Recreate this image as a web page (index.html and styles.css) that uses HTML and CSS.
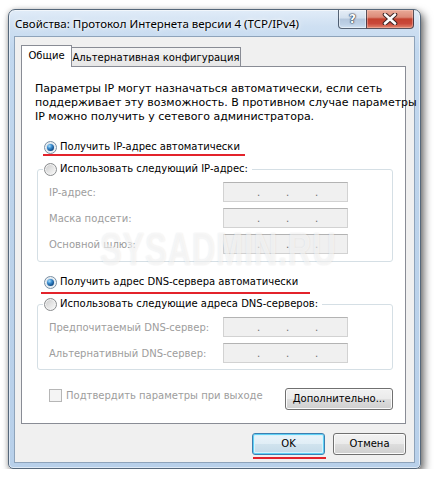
FILE: index.html
```html
<!DOCTYPE html>
<html lang="ru">
<head>
<meta charset="utf-8">
<title>Свойства: Протокол Интернета версии 4 (TCP/IPv4)</title>
<link rel="stylesheet" href="styles.css">
</head>
<body>
<div class="window">
  <div class="titlebar">
    <div class="title">Свойства: Протокол Интернета версии 4 (TCP/IPv4)</div>
    <div class="caption-btns">
      <div class="cbtn help"><span>?</span></div>
      <div class="cbtn close">
        <svg width="16" height="12" viewBox="0 0 16 12">
          <path d="M3 1.5 L13 10.5 M13 1.5 L3 10.5" stroke="#3d2424" stroke-width="4.6" stroke-linecap="round" fill="none"/>
          <path d="M3 1.5 L13 10.5 M13 1.5 L3 10.5" stroke="#ffffff" stroke-width="2.6" stroke-linecap="round" fill="none"/>
        </svg>
      </div>
    </div>
  </div>
  <div class="client">
    <div class="tabs">
      <div class="tab active">Общие</div>
      <div class="tab">Альтернативная конфигурация</div>
    </div>
    <div class="panel">
      <p class="intro">Параметры IP могут назначаться автоматически, если сеть<br>поддерживает эту возможность. В противном случае параметры<br>IP можно получить у сетевого администратора.</p>

      <div class="opt first mark mark-ip"><span class="radio on"></span>Получить IP-адрес автоматически</div>
      <fieldset class="group g1">
        <legend><span class="radio"></span>Использовать следующий IP-адрес:</legend>
        <div class="field"><span class="lbl">IP-адрес:</span><span class="ip"><i>.</i><i>.</i><i>.</i></span></div>
        <div class="field"><span class="lbl">Маска подсети:</span><span class="ip"><i>.</i><i>.</i><i>.</i></span></div>
        <div class="field"><span class="lbl">Основной шлюз:</span><span class="ip"><i>.</i><i>.</i><i>.</i></span></div>
      </fieldset>

      <div class="opt second mark mark-dns"><span class="radio on"></span>Получить адрес DNS-сервера автоматически</div>
      <fieldset class="group g2">
        <legend><span class="radio"></span>Использовать следующие адреса DNS-серверов:</legend>
        <div class="field"><span class="lbl">Предпочитаемый DNS-сервер:</span><span class="ip"><i>.</i><i>.</i><i>.</i></span></div>
        <div class="field"><span class="lbl">Альтернативный DNS-сервер:</span><span class="ip"><i>.</i><i>.</i><i>.</i></span></div>
      </fieldset>

      <div class="confirm-row">
        <div class="check-wrap"><span class="checkbox"></span><span class="check-text">Подтвердить параметры при выходе</span></div>
        <div class="btn adv">Дополнительно...</div>
      </div>
    </div>
    <div class="buttons">
      <div class="btn default mark mark-ok">OK</div>
      <div class="btn">Отмена</div>
    </div>
  </div>
  <div class="watermark">SYSADMIN.RU</div>
</div>
</body>
</html>
```
FILE: styles.css
```css
body {
  margin: 0;
  background: #ffffff;
  font-family: "DejaVu Sans", Tahoma, sans-serif;
  font-size: 10px;
  color: #000000;
}

.window {
  position: relative;
  box-sizing: border-box;
  width: 413px;
  height: 460px;
  margin: 9px 0 0 8px;
  border: 1px solid #56687b;
  border-radius: 7px 7px 5px 5px;
  padding: 0 5px 5px 5px;
  background: linear-gradient(180deg, #e1ecf8 0px, #cfe0f2 16px, #c2d8ef 40px, #bcd3eb 200px, #b8d0ea 100%);
  box-shadow: inset 0 0 0 1px rgba(255, 255, 255, 0.55), 3px 4px 9px rgba(0, 0, 0, 0.6), -1px 0 4px rgba(0, 0, 0, 0.12);
}

.titlebar {
  display: flex;
  align-items: flex-start;
  height: 26px;
}

.title {
  padding: 6px 0 0 1px;
  font-family: "Noto Sans", "Liberation Sans", sans-serif;
  font-size: 11.5px;
  line-height: 16px;
  color: #000;
  text-shadow: 0 0 6px #ffffff, 0 0 3px #ffffff;
  white-space: nowrap;
}

.caption-btns {
  display: flex;
  margin-left: auto;
  margin-right: 1px;
}

.cbtn {
  box-sizing: border-box;
  height: 19px;
  display: flex;
  align-items: center;
  justify-content: center;
  border: 1px solid rgba(40, 55, 75, 0.75);
  border-top: 0;
}

.help {
  width: 28px;
  border-radius: 0 0 0 4px;
  border-right: 0;
  background: linear-gradient(180deg, #e6eef7 0%, #d3e0ee 45%, #b4c7dd 50%, #bed1e6 80%, #d2e3f3 100%);
  box-shadow: inset 0 0 0 1px rgba(255, 255, 255, 0.45);
}

.help span {
  font-family: "DejaVu Sans", sans-serif;
  font-weight: bold;
  font-size: 12px;
  line-height: 12px;
  color: #ffffff;
  text-shadow: 0 0 1px #1f2f44, 0 0 1px #1f2f44, 0 0 2px #1f2f44;
}

.close {
  width: 48px;
  border-radius: 0 0 4px 0;
  background: linear-gradient(180deg, #e9aa98 0%, #dc8a78 40%, #c4422f 50%, #c9483a 75%, #e2866d 100%);
  box-shadow: inset 0 0 0 1px rgba(255, 210, 200, 0.4);
}

.close svg {
  display: block;
}

.client {
  box-sizing: border-box;
  width: 401px;
  height: 427px;
  border: 1px solid #8ea3ba;
  background: #f0f0f0;
  padding: 8px 0 0 6px;
}

.tabs {
  display: flex;
  align-items: flex-end;
  height: 21px;
}

.tab {
  box-sizing: border-box;
  height: 19px;
  width: 170px;
  margin-left: -1px;
  border: 1px solid #898c95;
  border-bottom: 0;
  background: linear-gradient(180deg, #f4f4f4 0%, #ececec 50%, #e6e6e6 100%);
  text-align: center;
  line-height: 20px;
  white-space: nowrap;
}

.tab.active {
  position: relative;
  z-index: 1;
  width: 51px;
  height: 22px;
  margin-left: 0;
  margin-bottom: -1px;
  background: #ffffff;
  line-height: 20px;
}

.panel {
  box-sizing: border-box;
  width: 385px;
  height: 358px;
  border: 1px solid #898c95;
  background: #ffffff;
  padding: 15px 12px 0 15px;
}

.intro {
  margin: 0 0 0 -2px;
  font-size: 11px;
  line-height: 14px;
  white-space: nowrap;
}

.opt {
  display: flex;
  align-items: center;
  height: 16px;
  line-height: 16px;
  margin-left: 7px;
  white-space: nowrap;
}

.opt.first {
  margin-top: 15px;
}

.opt.second {
  margin-top: 12px;
}

.mark {
  position: relative;
}

.mark::after {
  content: "";
  position: absolute;
  height: 2px;
  background: #e3232b;
}

.mark-ip::after {
  left: -1px;
  top: 15px;
  width: 202px;
}

.mark-dns::after {
  left: -3px;
  top: 18px;
  width: 269px;
}

.mark-ok::after {
  left: 0;
  top: 23px;
  width: 73px;
}

.radio {
  box-sizing: border-box;
  display: flex;
  align-items: center;
  justify-content: center;
  flex: none;
  width: 13px;
  height: 13px;
  margin-right: 3px;
  border-radius: 50%;
  border: 1px solid #8a8c8e;
  background: linear-gradient(135deg, #c9c9c9 0%, #e4e4e4 50%, #fbfbfb 100%);
  box-shadow: inset 0 0 0 1px #f3f3f3;
}

.radio.on {
  border-color: #7a8fa3;
  background: linear-gradient(135deg, #c5d9ea 0%, #e8f1f8 100%);
}

.radio.on::after {
  content: "";
  width: 7px;
  height: 7px;
  border-radius: 50%;
  background: radial-gradient(circle at 35% 30%, #aee0fb 0%, #3a8ccf 35%, #14508c 70%, #0d355f 100%);
}

.group {
  box-sizing: border-box;
  width: 356px;
  margin: 6px 0 0 0;
  border: 1px solid #d5dfe5;
  border-radius: 3px;
  padding: 5px 0 7px 11px;
  min-width: 0;
}

.group.g2 {
  padding-bottom: 6px;
}

.group legend {
  display: flex;
  align-items: center;
  height: 16px;
  line-height: 16px;
  margin-left: -6px;
  padding: 0 4px 0 1px;
  white-space: nowrap;
}

.field {
  display: flex;
  align-items: center;
  height: 20px;
  margin-top: 6px;
}

.field:first-of-type {
  margin-top: 0;
}

.lbl {
  width: 174px;
  color: #9d9d9d;
  white-space: nowrap;
}

.ip {
  box-sizing: border-box;
  display: flex;
  align-items: center;
  gap: 26px;
  width: 125px;
  height: 20px;
  padding: 2px 0 0 33px;
  border: 1px solid #d2d2d2;
  border-top-color: #b3b3b3;
  background: #f0f0f0;
  color: #6d6d6d;
}

.ip i {
  font-style: normal;
  width: 3px;
  line-height: 12px;
}

.confirm-row {
  display: flex;
  justify-content: space-between;
  align-items: flex-start;
  width: 356px;
  margin-top: 18px;
}

.check-wrap {
  display: flex;
  align-items: center;
  height: 13px;
  margin-top: 1px;
  padding-left: 12px;
}

.checkbox {
  box-sizing: border-box;
  width: 13px;
  height: 13px;
  margin-right: 4px;
  border: 1px solid #b6b6b6;
  background: #f4f4f4;
}

.check-text {
  color: #9d9d9d;
  white-space: nowrap;
  line-height: 14px;
}

.btn {
  box-sizing: border-box;
  height: 22px;
  width: 73px;
  border: 1px solid #707070;
  border-radius: 3px;
  background: linear-gradient(180deg, #f2f2f2 0%, #ebebeb 48%, #dddddd 52%, #cfcfcf 100%);
  box-shadow: inset 0 0 0 1px #fbfbfb;
  text-align: center;
  line-height: 20px;
  white-space: nowrap;
}

.btn.adv {
  width: 108px;
}

.btn.default {
  border-color: #3c7fb1;
  background: linear-gradient(180deg, #eaf4fa 0%, #e0eef6 48%, #d0e3ee 52%, #c4dae8 100%);
  box-shadow: inset 0 0 0 1px #5fd0f5, inset 0 0 0 2px #d8f2fb;
}

.buttons {
  display: flex;
  justify-content: flex-end;
  gap: 8px;
  width: 385px;
  margin-top: 9px;
}

.watermark {
  position: absolute;
  left: 91px;
  top: 216px;
  font-family: "Liberation Sans", Arial, sans-serif;
  font-weight: bold;
  font-size: 46px;
  line-height: 46px;
  letter-spacing: 1px;
  color: rgba(255, 255, 255, 0.6);
  text-shadow: 0 0 2px rgba(0, 0, 0, 0.1);
  transform: scaleX(0.71);
  transform-origin: left top;
  pointer-events: none;
  white-space: nowrap;
}
```
